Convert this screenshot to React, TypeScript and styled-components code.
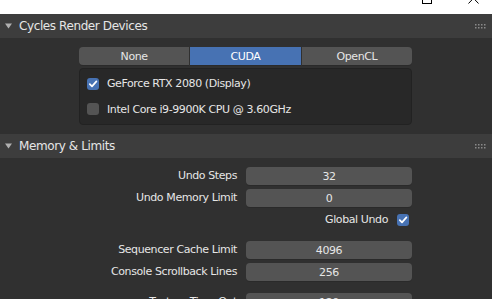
import styled, { createGlobalStyle } from 'styled-components'

const GlobalStyle = createGlobalStyle`
  html, body {
    margin: 0;
    padding: 0;
    background: #ffffff;
  }
  body {
    font-family: "DejaVu Sans", "Liberation Sans", sans-serif;
  }
`

const Screen = styled.div`
  width: 493px;
  height: 299px;
  overflow: hidden;
  background: #ffffff;
  display: flex;
  flex-direction: column;
`

const TitleBar = styled.div`
  height: 14px;
  flex: none;
  display: flex;
  justify-content: flex-end;
  align-items: flex-end;
  gap: 36px;
  padding-right: 14px;
  overflow: hidden;
`

const Panels = styled.div`
  width: 492px;
  flex: 1;
  background: #303030;
`

const Header = styled.div`
  height: 24px;
  background: #3d3d3d;
  display: flex;
  align-items: center;
  padding: 0 6px 0 5px;
  color: #e6e6e6;
  font-size: 12px;
  letter-spacing: -0.4px;
`

const Title = styled.span`
  flex: 1;
  margin-left: 7px;
`

const Body = styled.div`
  padding: 9px 80px 9px 79px;
  display: flex;
  flex-direction: column;
  gap: 3px;
`

const Tabs = styled.div`
  display: flex;
  height: 18px;
`

const Tab = styled.div<{ $active?: boolean }>`
  flex: 1;
  display: flex;
  align-items: center;
  justify-content: center;
  background: ${p => (p.$active ? '#4772b3' : '#545454')};
  color: ${p => (p.$active ? '#ffffff' : '#e6e6e6')};
  font-size: 11px;
  letter-spacing: -0.4px;
  margin-right: 1px;
  box-shadow: 0 1px 0 #2a2a2a;

  &:first-child {
    border-radius: 4px 0 0 4px;
  }
  &:last-child {
    border-radius: 0 4px 4px 0;
    margin-right: 0;
  }
`

const DeviceBox = styled.div`
  height: 57px;
  box-sizing: border-box;
  background: #282828;
  border: 1px solid #222222;
  border-radius: 4px;
  padding: 2px 7px;
  display: flex;
  flex-direction: column;
  justify-content: space-around;
`

const CheckRow = styled.label`
  display: flex;
  align-items: center;
  gap: 8px;
  color: #e6e6e6;
  font-size: 11px;
  letter-spacing: -0.4px;
  height: 20px;
`

const Box = styled.span<{ $on?: boolean }>`
  width: 12px;
  height: 12px;
  flex: none;
  border-radius: 3px;
  background: ${p => (p.$on ? '#4772b3' : '#545454')};
  display: flex;
  align-items: center;
  justify-content: center;
`

const PropBody = styled.div`
  padding: 9px 80px 0 79px;
  display: grid;
  grid-template-columns: 1fr 166px;
  column-gap: 9px;
  row-gap: 4px;
`

const Label = styled.div`
  color: #e6e6e6;
  font-size: 11px;
  letter-spacing: -0.4px;
  text-align: right;
  line-height: 18px;
`

const Field = styled.div`
  height: 18px;
  border-radius: 4px;
  background: #545454;
  box-shadow: 0 1px 0 #2a2a2a;
  color: #e6e6e6;
  font-size: 11px;
  letter-spacing: -0.4px;
  display: flex;
  align-items: center;
  justify-content: center;
`

const ToggleRow = styled.div`
  grid-column: 1 / span 2;
  display: flex;
  justify-content: flex-end;
  align-items: center;
  gap: 9px;
  height: 18px;
  padding-right: 3px;
  margin-bottom: 8px;
`

const Gap = styled.div`
  grid-column: 1 / span 2;
  height: 4px;
`

function Triangle() {
  return (
    <svg width="7" height="6" viewBox="0 0 7 6">
      <path d="M0 0.5 H7 L3.5 5.5 Z" fill="#b0b0b0" />
    </svg>
  )
}

function Grip() {
  return (
    <svg width="11" height="5" viewBox="0 0 11 5">
      {[0, 3, 6, 9].map(x =>
        [0, 3].map(y => <rect key={`${x}-${y}`} x={x} y={y} width="1.5" height="1.5" fill="#8a8a8a" />)
      )}
    </svg>
  )
}

function Check() {
  return (
    <svg width="10" height="10" viewBox="0 0 10 10">
      <path d="M1.8 5.2 L4 7.4 L8.4 2.4" fill="none" stroke="#ffffff" strokeWidth="1.7" strokeLinecap="round" strokeLinejoin="round" />
    </svg>
  )
}

function Section({ title }: { title: string }) {
  return (
    <Header>
      <Triangle />
      <Title>{title}</Title>
      <Grip />
    </Header>
  )
}

const props: [string, string][] = [
  ['Undo Steps', '32'],
  ['Undo Memory Limit', '0'],
]

const props2: [string, string][] = [
  ['Sequencer Cache Limit', '4096'],
  ['Console Scrollback Lines', '256'],
]

export default function App() {
  return (
    <>
      <GlobalStyle />
      <Screen>
        <TitleBar>
          <svg width="10" height="14" viewBox="0 0 10 14">
            <rect x="0.5" y="-6" width="9" height="9.5" fill="none" stroke="#000" />
          </svg>
          <svg width="11" height="14" viewBox="0 0 11 14">
            <path d="M0.5 -7 L10.5 3.5 M10.5 -7 L0.5 3.5" stroke="#000" strokeWidth="1" />
          </svg>
        </TitleBar>
        <Panels>
          <Section title="Cycles Render Devices" />
          <Body>
            <Tabs>
              <Tab>None</Tab>
              <Tab $active>CUDA</Tab>
              <Tab>OpenCL</Tab>
            </Tabs>
            <DeviceBox>
              <CheckRow>
                <Box $on><Check /></Box>
                GeForce RTX 2080 (Display)
              </CheckRow>
              <CheckRow>
                <Box />
                Intel Core i9-9900K CPU @ 3.60GHz
              </CheckRow>
            </DeviceBox>
          </Body>
          <Section title="Memory &amp; Limits" />
          <PropBody>
            {props.map(([l, v]) => (
              <>
                <Label key={l}>{l}</Label>
                <Field key={l + 'v'}>{v}</Field>
              </>
            ))}
            <ToggleRow>
              <Label>Global Undo</Label>
              <Box $on><Check /></Box>
            </ToggleRow>
            {props2.map(([l, v]) => (
              <>
                <Label key={l}>{l}</Label>
                <Field key={l + 'v'}>{v}</Field>
              </>
            ))}
            <Gap />
            <Label>Texture Time Out</Label>
            <Field>120</Field>
          </PropBody>
        </Panels>
      </Screen>
    </>
  )
}
